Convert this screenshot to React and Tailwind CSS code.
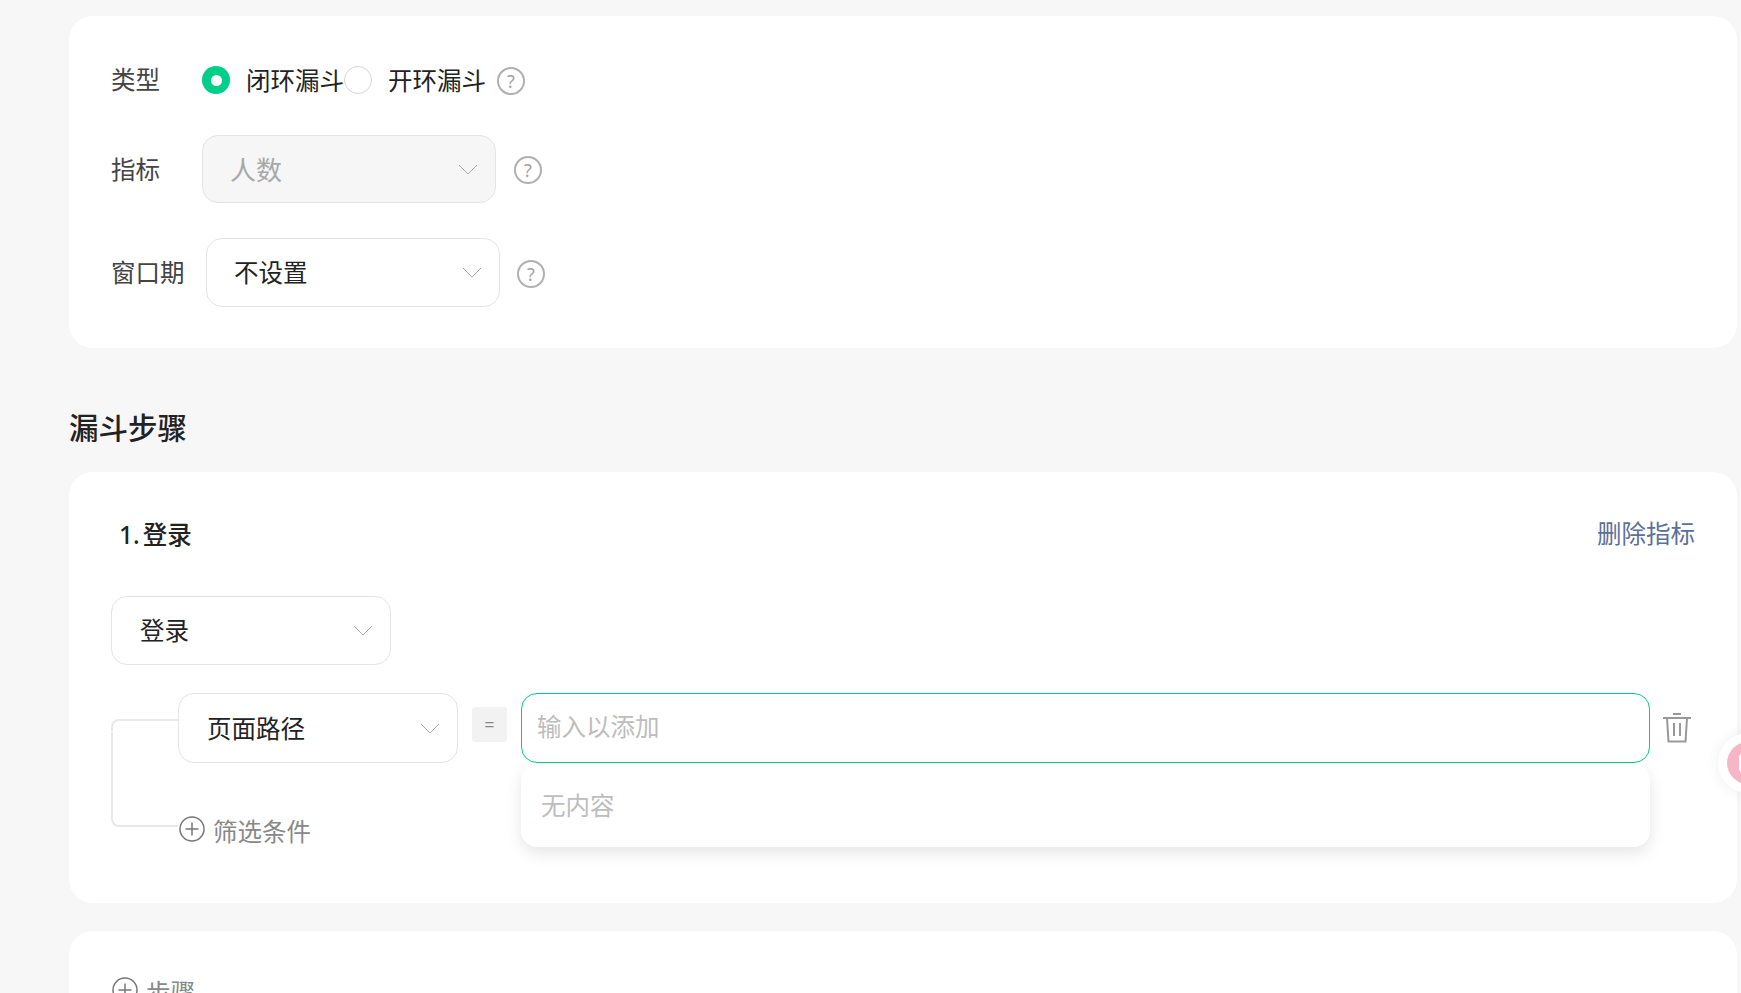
const font = { fontFamily: '"Noto Sans", "Noto Sans CJK SC", sans-serif' };

function Chevron({ className }) {
  return (
    <svg width="20" height="11" viewBox="0 0 20 11" fill="none" className={className}>
      <path d="M1 1l9 9 9-9" stroke="#a8a8a8" strokeWidth="1" />
    </svg>
  );
}

function Help({ className }) {
  return (
    <span
      className={`mt-[2px] flex h-[28px] w-[28px] shrink-0 items-center justify-center rounded-full border-2 border-[#b0b0b0] text-[18px] leading-none text-[#a3a3a3] ${className || ''}`}
    >
      ?
    </span>
  );
}

function PlusCircle() {
  return (
    <svg width="26" height="26" viewBox="0 0 26 26" fill="none" className="shrink-0">
      <circle cx="13" cy="13" r="12" stroke="#777" strokeWidth="1.5" />
      <path d="M13 6.5v13M6.5 13h13" stroke="#777" strokeWidth="1.5" />
    </svg>
  );
}

function Select({ value, disabled, className }) {
  return (
    <div
      className={`flex w-[294px] items-center justify-between rounded-[16px] border border-[#e4e4e4] pl-[27px] pr-[17px] ${
        disabled ? 'bg-[#f5f6f5] text-[26px] text-[#a8a8a8]' : 'bg-white text-[24.5px] text-[#222]'
      } ${className || ''}`}
    >
      <span className="mt-[2px]">{value}</span>
      <Chevron />
    </div>
  );
}

export default function App() {
  return (
    <div style={font} className="relative h-[993px] overflow-hidden bg-[#f7f7f7] pl-[69px] pr-[4px] pt-[16px]">
      <div className="h-[332px] rounded-[24px] bg-white pl-[42px] pt-[50px]">
        <div className="flex h-[28px] items-center">
          <span className="w-[91px] text-[24.5px] text-[#444]">类型</span>
          <span className="flex h-[28px] w-[28px] items-center justify-center rounded-full bg-[#00cf8a]">
            <span className="h-[11px] w-[11px] rounded-full bg-white" />
          </span>
          <span className="ml-[16px] mt-[2px] text-[24.5px] text-[#222]">闭环漏斗</span>
          <span className="h-[28px] w-[28px] rounded-full border border-[#d5d5dc] bg-white" />
          <span className="ml-[16px] mt-[2px] text-[24.5px] text-[#222]">开环漏斗</span>
          <Help className="ml-[11px]" />
        </div>
        <div className="mt-[41px] flex items-center">
          <span className="mt-[2px] w-[91px] text-[24.5px] text-[#444]">指标</span>
          <Select value="人数" disabled className="h-[68px]" />
          <Help className="ml-[18px]" />
        </div>
        <div className="mt-[35px] flex items-center">
          <span className="mt-[2px] w-[95px] text-[24.5px] text-[#444]">窗口期</span>
          <Select value="不设置" className="h-[69px]" />
          <Help className="ml-[17px]" />
        </div>
      </div>

      <h2 className="mt-[60px] h-[64px] text-[29.5px] font-medium leading-[40px] text-[#222]">漏斗步骤</h2>

      <div className="h-[431px] rounded-[24px] bg-white pl-[42px] pr-[43px] pt-[43px]">
        <div className="flex h-[40px] items-center justify-between">
          <span className="pl-[8px] text-[24.5px] font-medium text-[#222]">
            1.<span className="ml-[3px]">登录</span>
          </span>
          <span className="-mr-[1px] -mt-[2px] text-[24.5px] text-[#5b6f9a]">删除指标</span>
        </div>
        <Select value="登录" className="mt-[41px] h-[69px] !w-[280px] !pl-[28px]" />
        <div className="relative mt-[28px] flex items-start">
          {/* connector is two pieces, there is a small gap under the corner */}
          <div className="absolute left-0 top-[26px] h-[12px] w-[67px] rounded-tl-[8px] border-l-2 border-t-2 border-[#e8e8e8]" />
          <div className="absolute left-0 top-[39px] h-[95px] w-[67px] rounded-bl-[8px] border-b-2 border-l-2 border-[#e8e8e8]" />
          <Select value="页面路径" className="ml-[67px] h-[70px] !w-[280px] !pl-[28px]" />
          <span className="ml-[14px] mt-[14px] flex h-[35px] w-[35px] items-center justify-center rounded-[3px] bg-[#f2f2f2] text-[18px] text-[#888]">
            =
          </span>
          <div className="relative ml-[14px] flex-1">
            <div className="flex h-[70px] items-center rounded-[16px] border border-[#00cf8a] pb-[2px] pl-[15px] text-[24.5px] text-[#bdbdbd]">
              输入以添加
            </div>
            <div className="absolute left-0 right-0 top-[71px] flex h-[83px] items-center rounded-[16px] bg-white pl-[20px] pt-[2px] text-[24.5px] text-[#bdbdbd] shadow-[0_6px_16px_rgba(0,0,0,0.1)]">
              无内容
            </div>
          </div>
          <svg width="30" height="31" viewBox="0 0 30 31" fill="none" className="ml-[12px] mr-[2px] mt-[19px] shrink-0">
            <path d="M1 6h28M11 2h8M5 6l1.5 23.5h17L25 6M12 11v13M18 11v13" stroke="#999" strokeWidth="2" />
          </svg>
        </div>
        <div className="ml-[68px] mt-[53px] flex items-start gap-[8px] text-[24.5px] text-[#888]">
          <PlusCircle />
          <span className="-mt-[2px]">筛选条件</span>
        </div>
      </div>

      <div className="mt-[28px] h-[200px] rounded-[24px] bg-white pl-[43px] pt-[46px]">
        <div className="flex items-start gap-[8px] text-[24.5px] text-[#888]">
          <PlusCircle />
          <span className="-mt-[2px]">步骤</span>
        </div>
      </div>

      <div className="absolute left-[1718px] top-[733px] flex h-[60px] w-[60px] items-center justify-center rounded-full bg-white shadow-[0_0_14px_rgba(0,0,0,0.07)]">
        <span className="relative h-[42px] w-[42px] rounded-full bg-[#f6b6c8]">
          <span className="absolute left-[12px] top-[10px] h-[22px] w-[10px] rounded-l-[6px] bg-white" />
        </span>
      </div>
    </div>
  );
}
